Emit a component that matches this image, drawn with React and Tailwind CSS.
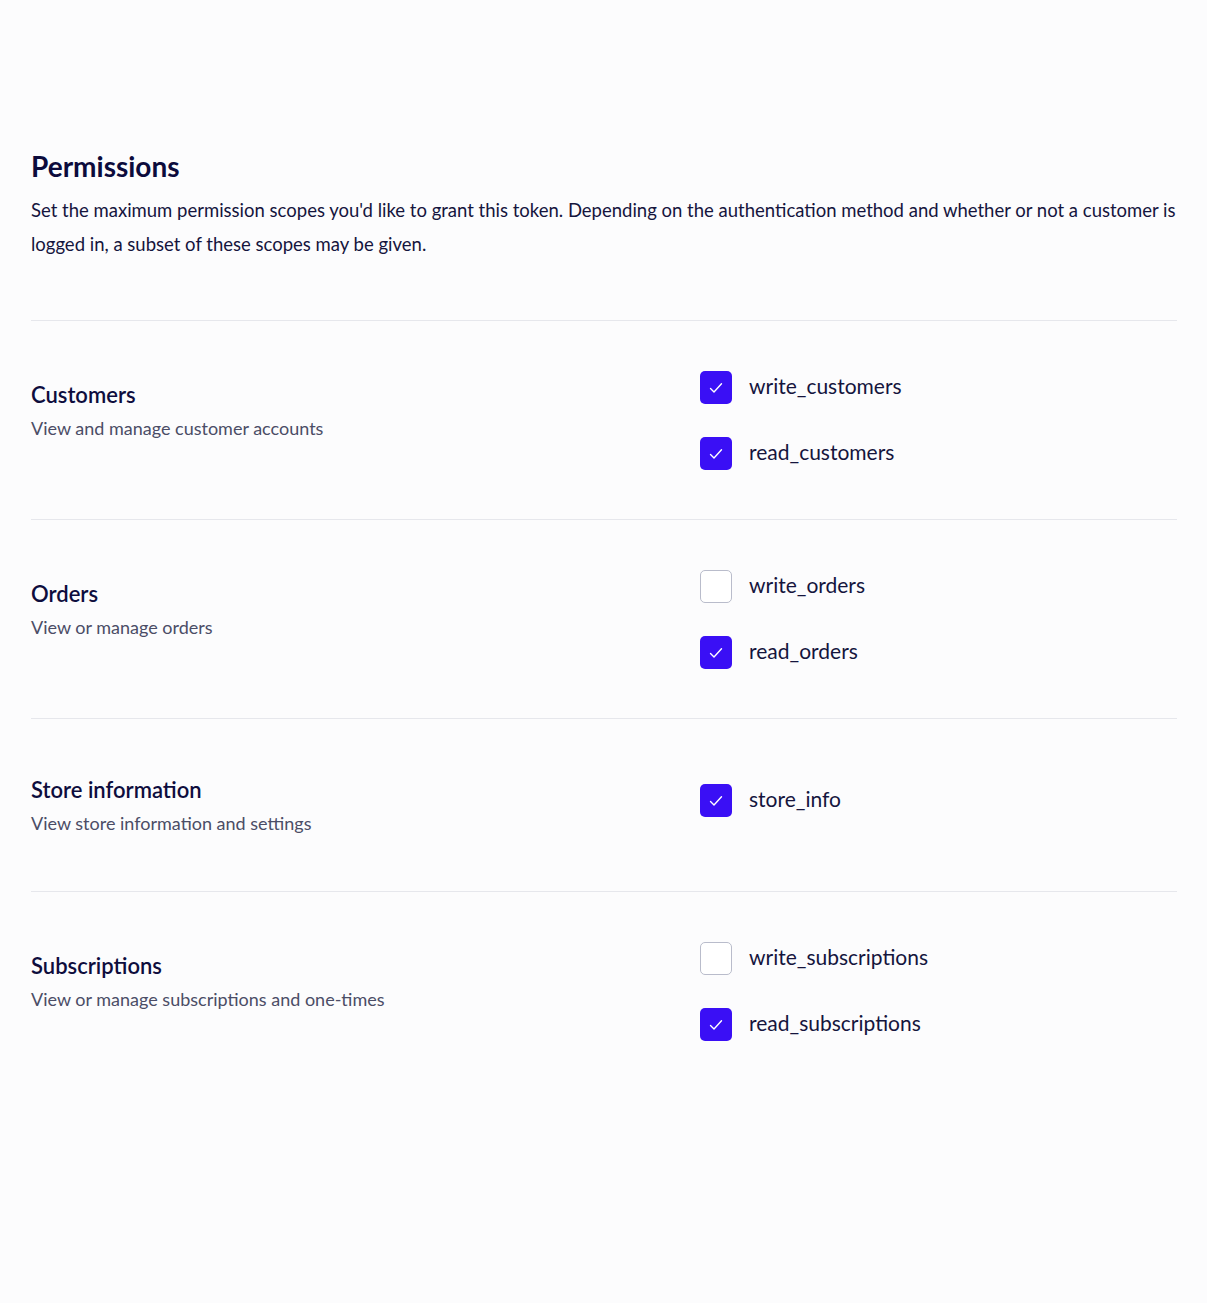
import React, { useState } from 'react';

const sections = [
  {
    title: 'Customers',
    description: 'View and manage customer accounts',
    scopes: [
      { name: 'write_customers', checked: true },
      { name: 'read_customers', checked: true },
    ],
  },
  {
    title: 'Orders',
    description: 'View or manage orders',
    scopes: [
      { name: 'write_orders', checked: false },
      { name: 'read_orders', checked: true },
    ],
  },
  {
    title: 'Store information',
    description: 'View store information and settings',
    scopes: [{ name: 'store_info', checked: true }],
  },
  {
    title: 'Subscriptions',
    description: 'View or manage subscriptions and one-times',
    scopes: [
      { name: 'write_subscriptions', checked: false },
      { name: 'read_subscriptions', checked: true },
    ],
  },
];

const ScopeCheckbox = ({ label, checked, onToggle }) => (
  <label className="flex items-center gap-[17px] cursor-pointer select-none">
    <button
      type="button"
      onClick={onToggle}
      className={
        checked
          ? 'w-[32px] h-[33px] rounded-[5px] bg-[#3a0ff5] flex items-center justify-center'
          : 'w-[32px] h-[33px] rounded-[5px] bg-white border-[1.5px] border-[#b9bccb]'
      }
    >
      {checked && (
        <svg width="14" height="12" viewBox="0 0 14 12" fill="none">
          <path d="M1.5 6.5 L5 10 L12.5 1.8" stroke="white" strokeWidth="1.4" strokeLinecap="round" strokeLinejoin="round" />
        </svg>
      )}
    </button>
    <span className="text-[21px] leading-[28px] -mt-[3px] text-[#15153d]">{label}</span>
  </label>
);

const PermissionSection = ({ section, single }) => {
  const [scopes, setScopes] = useState(section.scopes);

  const toggle = (i) =>
    setScopes((prev) => prev.map((s, idx) => (idx === i ? { ...s, checked: !s.checked } : s)));

  return (
    <div
      className={
        single
          ? 'flex border-t border-[#e6e7ec] pt-[57px] pb-[54px]'
          : 'flex border-t border-[#e6e7ec] pt-[50px] pb-[49px]'
      }
    >
      <div className={single ? 'w-[669px]' : 'w-[669px] pt-[10px]'}>
        <h3 className="text-[22px] font-semibold leading-[28px] text-[#0e0d3d]">{section.title}</h3>
        <p className="mt-[5px] text-[18px] leading-[28px] text-[#4b4d66]">{section.description}</p>
      </div>
      <div className={single ? 'flex flex-col gap-[33px] pt-[8px]' : 'flex flex-col gap-[33px]'}>
        {scopes.map((s, i) => (
          <ScopeCheckbox key={s.name} label={s.name} checked={s.checked} onToggle={() => toggle(i)} />
        ))}
      </div>
    </div>
  );
};

export default function App() {
  return (
    <div className="min-h-[1303px] bg-[#fcfcfd] px-[31px] pt-[149px]" style={{ fontFamily: 'Lato, "Noto Sans", sans-serif' }}>
      <div className="w-[1146px]">
        <h2 className="text-[28px] font-bold leading-[34px] text-[#0c0b3c]">Permissions</h2>
        <p className="mt-[10px] text-[18.5px] leading-[34px] text-[#15153d]">
          Set the maximum permission scopes you'd like to grant this token. Depending on the authentication method and whether or not a customer is logged in, a subset of these scopes may be given.
        </p>
        <div className="mt-[59px]">
          {sections.map((section) => (
            <PermissionSection key={section.title} section={section} single={section.scopes.length === 1} />
          ))}
        </div>
      </div>
    </div>
  );
}
